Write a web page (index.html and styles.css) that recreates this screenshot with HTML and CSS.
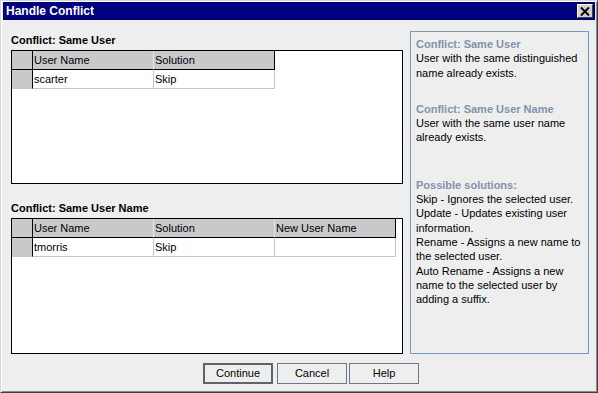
FILE: index.html
```html
<!DOCTYPE html>
<html lang="en">

<head>
    <meta charset="UTF-8">
    <meta name="viewport" content="width=device-width, initial-scale=1.0">
    <title>Handle Conflict</title>
    <link rel="stylesheet" href="styles.css">
</head>

<body>

    <div class="dialog">
        <div class="titlebar">
            <span class="title">Handle Conflict</span>
            <span class="close">
                <svg width="10" height="9" viewBox="0 0 10 9">
                    <path d="M1 0.5 L9 8.5 M9 0.5 L1 8.5" stroke="#000" stroke-width="2" fill="none" />
                </svg>
            </span>
        </div>

        <div class="content">
            <div class="main">
                <div class="leftCol">
                    <div class="groupLabel">Conflict: Same User</div>
                    <div class="gridBox boxUser">
                        <div class="grid cols2">
                            <div class="cell rowHead head"></div>
                            <div class="cell head">User Name</div>
                            <div class="cell head lastHead">Solution</div>
                            <div class="cell rowHead"></div>
                            <div class="cell">scarter</div>
                            <div class="cell">Skip</div>
                        </div>
                    </div>

                    <div class="groupLabel second">Conflict: Same User Name</div>
                    <div class="gridBox boxName">
                        <div class="grid cols3">
                            <div class="cell rowHead head"></div>
                            <div class="cell head">User Name</div>
                            <div class="cell head">Solution</div>
                            <div class="cell head lastHead">New User Name</div>
                            <div class="cell rowHead"></div>
                            <div class="cell">tmorris</div>
                            <div class="cell">Skip</div>
                            <div class="cell"></div>
                        </div>
                    </div>
                </div>

                <div class="infoPanel">
                    <div class="infoTitle">Conflict: Same User</div>
                    <div>User with the same distinguished<br>name already exists.</div>

                    <div class="infoTitle gap1">Conflict: Same User Name</div>
                    <div>User with the same user name<br>already exists.</div>

                    <div class="infoTitle gap2">Possible solutions:</div>
                    <div>Skip - Ignores the selected user.<br>
                        Update - Updates existing user<br>information.<br>
                        Rename - Assigns a new name to<br>the selected user.<br>
                        Auto Rename - Assigns a new<br>name to the selected user by<br>adding a suffix.</div>
                </div>
            </div>

            <div class="buttons">
                <div class="btn default">Continue</div>
                <div class="btn cancel">Cancel</div>
                <div class="btn">Help</div>
            </div>
        </div>
    </div>

</body>

</html>
```

FILE: styles.css
```css
body {
    margin: 0;
    background-color: #eeeeee;
    font-family: "Liberation Sans", Arial, sans-serif;
    font-size: 11px;
    color: #000;
}

.dialog {
    width: 598px;
    height: 393px;
    box-sizing: border-box;
    display: flex;
    flex-direction: column;
    background-color: #eeeeee;
    border: 1px solid;
    border-color: #d8d8d8 #404040 #404040 #d8d8d8;
    box-shadow: inset 1px 1px 0 #ffffff, inset -1px -1px 0 #8a8a8a;
    padding: 1px 2px 3px 2px;
}

/* title bar */
.titlebar {
    height: 18px;
    flex: none;
    display: flex;
    align-items: center;
    justify-content: space-between;
    background-color: #000080;
    padding-left: 3px;
    padding-right: 2px;
}

.title {
    color: #fff;
    font-weight: bold;
    font-size: 12px;
}

.close {
    width: 16px;
    height: 14px;
    box-sizing: border-box;
    display: flex;
    align-items: center;
    justify-content: center;
    background-color: #d4d0c8;
    border: 1px solid;
    border-color: #ffffff #404040 #404040 #ffffff;
}

/* body */
.content {
    flex: 1;
    padding: 11px 6px 0 8px;
}

.main {
    display: flex;
    gap: 7px;
}

.leftCol {
    width: 392px;
}

.groupLabel {
    height: 19px;
    line-height: 19px;
    font-weight: bold;
}

.groupLabel.second {
    margin-top: 15px;
}

.gridBox {
    box-sizing: border-box;
    border: 1px solid #000;
    background-color: #fff;
}

.boxUser {
    height: 134px;
}

.boxName {
    height: 136px;
}

.grid {
    display: grid;
    grid-auto-rows: 19px;
}

.cols2 {
    grid-template-columns: 21px 121px 121px;
}

.cols3 {
    grid-template-columns: 21px 121px 121px 121px;
}

.cell {
    box-sizing: border-box;
    padding-left: 1px;
    line-height: 18px;
    white-space: nowrap;
    border-right: 1px solid #c6c6c6;
    border-bottom: 1px solid #c6c6c6;
}

.cell.head {
    background-color: #c9c9cc;
    border-right-color: #e4e4e6;
    border-bottom-color: #000;
}

.cell.lastHead {
    border-right-color: #000;
}

.cell.rowHead {
    background-color: #c9c9cc;
    border-right-color: #000;
}

/* description panel */
.infoPanel {
    width: 179px;
    height: 323px;
    box-sizing: border-box;
    border: 1px solid #7a98ba;
    padding: 5px 4px 0 5px;
    line-height: 14.3px;
}

.infoTitle {
    font-weight: bold;
    color: #8592ad;
}

.infoTitle.gap1 {
    margin-top: 22px;
}

.infoTitle.gap2 {
    margin-top: 33px;
}

/* buttons */
.buttons {
    display: flex;
    margin-top: 9px;
    padding-left: 192px;
}

.btn {
    width: 70px;
    height: 21px;
    box-sizing: border-box;
    border: 1px solid #6b7889;
    text-align: center;
    line-height: 19px;
    margin-right: 2px;
}

.btn.default {
    border: 2px solid #5c6470;
    line-height: 17px;
    margin-right: 4px;
}
```
